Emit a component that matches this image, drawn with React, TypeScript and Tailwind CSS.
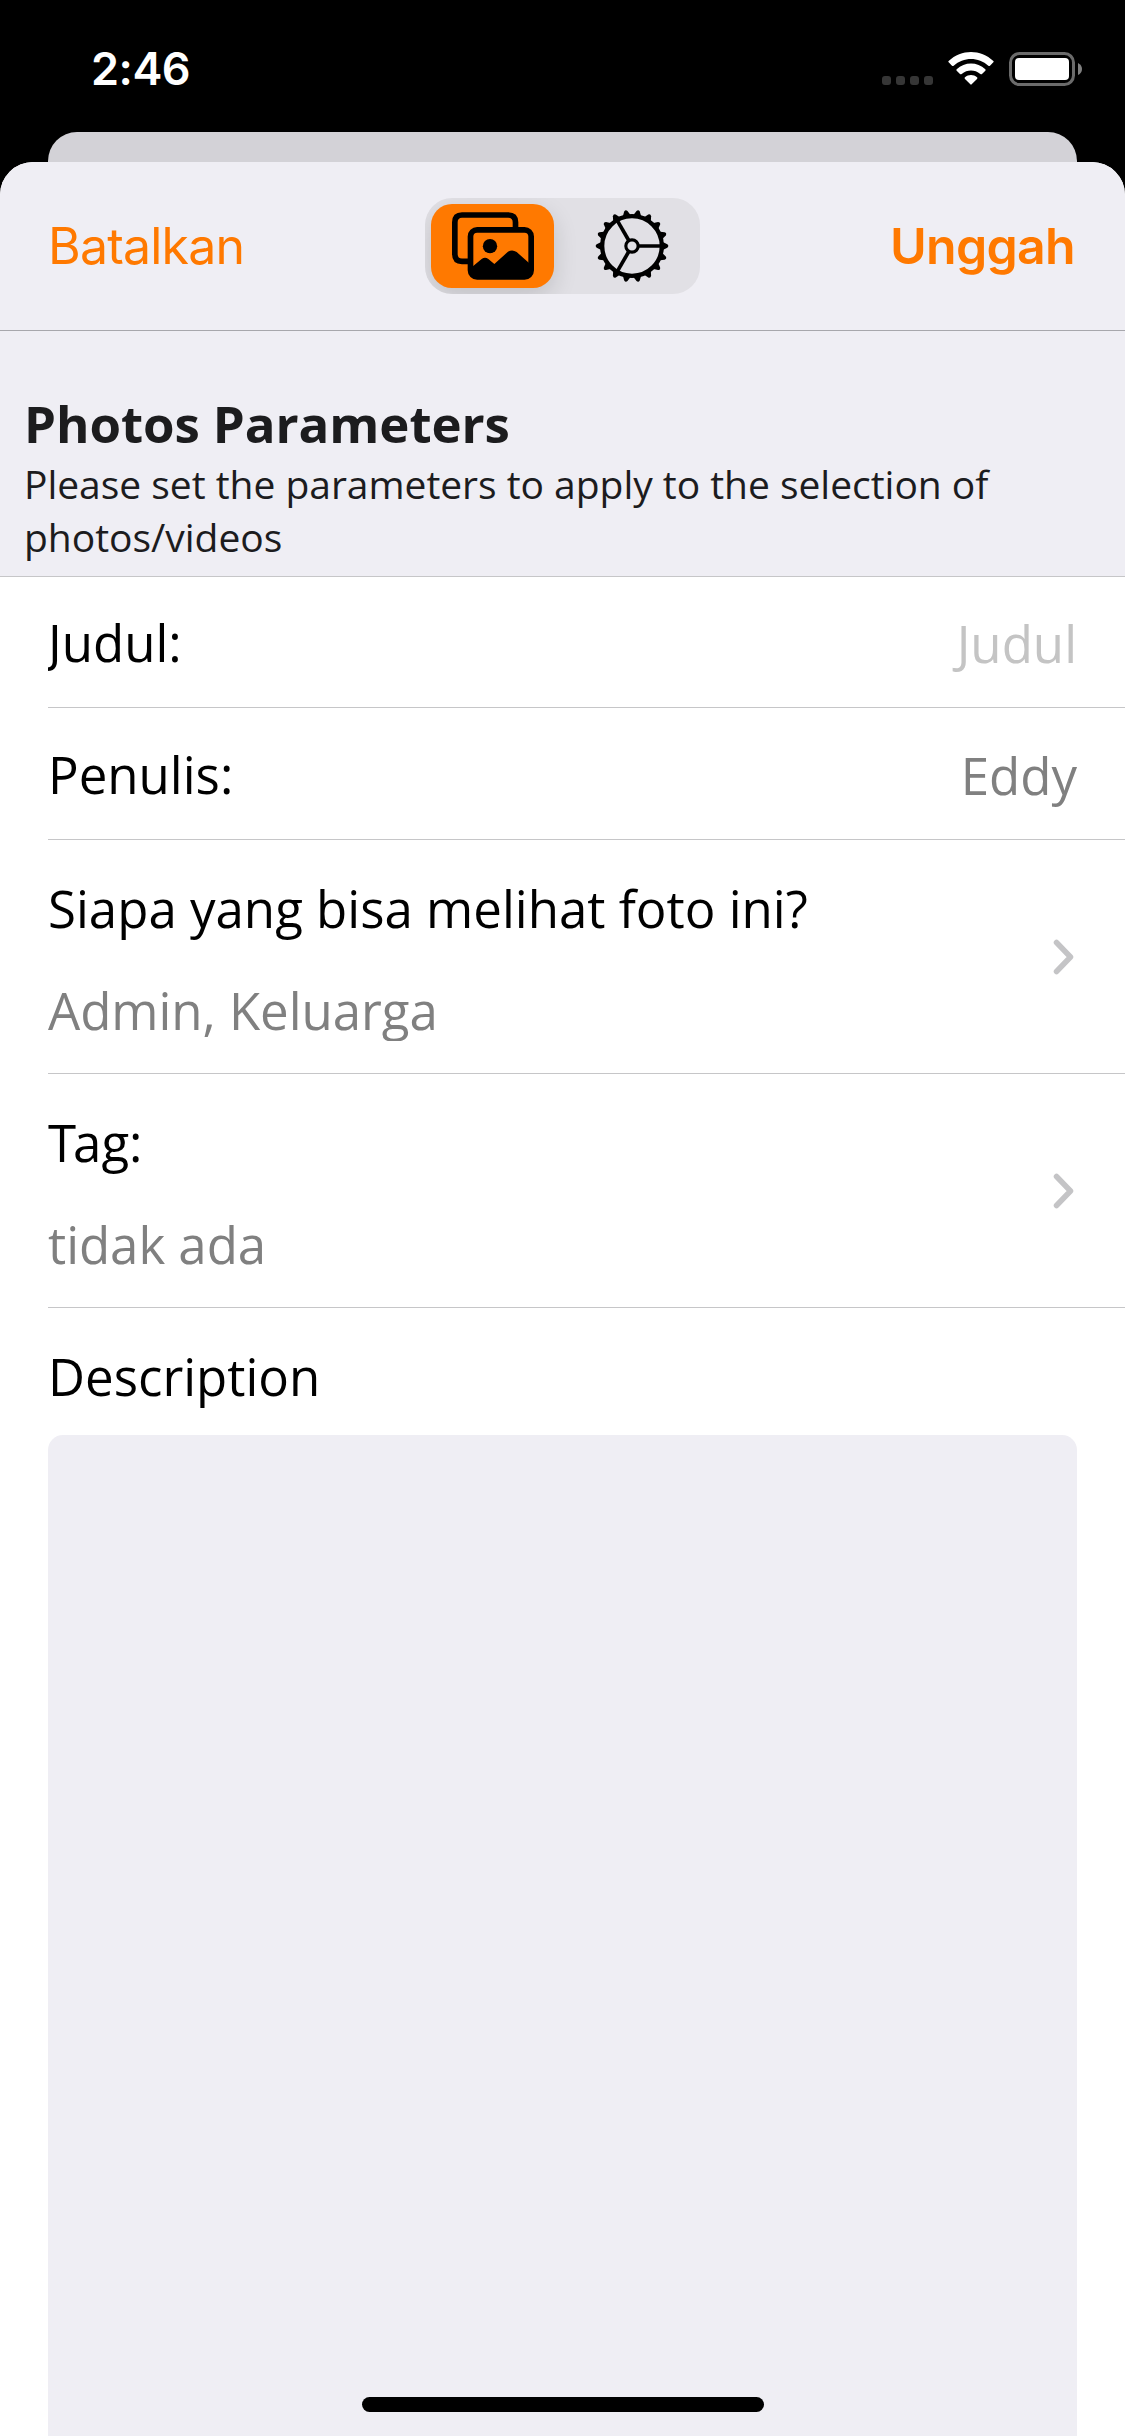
import type { ReactNode } from "react";

const teeth = Array.from({ length: 18 }, (_, i) => i * 20);

function WifiIcon() {
  return (
    <svg className="mt-[52px] h-[33px] w-[46px]" viewBox="0 0 138 99" fill="#fff">
      <path d="M2 27 C40 -9 98 -9 136 27 Q138 29 136 31 L126 41 Q124 43 121 41 C92 14 46 14 17 41 Q14 43 12 41 L2 31 Q0 29 2 27 Z" />
      <path d="M26 52 C50 29 88 29 112 52 Q114 54 112 56 L102 66 Q100 68 97 66 C80 52 58 52 41 66 Q38 68 36 66 L26 56 Q24 54 26 52 Z" />
      <path d="M51 76 C61 67 77 67 87 76 Q90 78 87 81 L71 97 Q69 99 67 97 L51 81 Q48 78 51 76 Z" />
    </svg>
  );
}

function BatteryIcon() {
  return (
    <svg className="mt-[52px] h-[34px] w-[73px]" viewBox="0 0 73 34" fill="none">
      <rect x="1.5" y="1.5" width="63" height="31" rx="9" stroke="#6b6b6b" strokeWidth="3" />
      <rect x="6" y="6" width="54" height="22" rx="4" fill="#fff" />
      <path d="M69 11 Q73 13 73 17 Q73 21 69 23 Z" fill="#808080" />
    </svg>
  );
}

function PhotosIcon() {
  return (
    <svg className="h-[68px] w-[82px]" viewBox="126 97 246 204" fill="none">
      <path
        d="M316.500 143 V128 Q316.500 106 294.500 106 H156 Q134.500 106 134.500 128 V223 Q134.500 245 156 245 H176"
        stroke="#000"
        strokeWidth="17"
      />
      <rect x="181.500" y="150.500" width="182" height="141" rx="20" stroke="#000" strokeWidth="17" />
      <circle cx="240" cy="199.500" r="21.500" fill="#000" />
      <path
        d="M186 262 L215 238 Q225 230 235 238 L253 253 L293 217 Q306 208 320 217 L358 251 V280 Q356 290 345 290 H200 Q188 290 186 280 Z"
        fill="#000"
      />
    </svg>
  );
}

function GearIcon() {
  return (
    <svg className="h-[74px] w-[74px]" viewBox="-111 -111 222 222" fill="none">
      {teeth.map((angle) => (
        <path
          key={angle}
          d="M88 -14 L106 -5 Q112 0 106 5 L88 14 Z"
          fill="#000"
          transform={`rotate(${angle})`}
        />
      ))}
      <circle r="89.500" stroke="#000" strokeWidth="13" />
      <circle r="18.500" stroke="#000" strokeWidth="9.500" />
      {[0, 120, 240].map((angle) => (
        <path key={angle} d="M20 0 H88" stroke="#000" strokeWidth="11" transform={`rotate(${angle})`} />
      ))}
    </svg>
  );
}

function Chevron() {
  return (
    <svg className="h-9 w-[22px]" viewBox="0 0 22 36" fill="none">
      <path d="M3.500 3.500 L17.500 18 L3.500 32.500" stroke="#c4c4c6" strokeWidth="5.500" strokeLinecap="round" strokeLinejoin="round" />
    </svg>
  );
}

function FieldRow({ label, children }: { label: string; children: ReactNode }) {
  return (
    <div className="ml-12 flex items-start justify-between border-b border-[#c6c6c8] pr-12 pt-[30px]">
      <span className="overflow-x-clip leading-[70px]">{label}</span>
      {children}
    </div>
  );
}

function LinkRow({ label, value }: { label: ReactNode; value: string }) {
  return (
    <div className="ml-12 flex h-[234px] items-center justify-between border-b border-[#c6c6c8] pr-[50px]">
      <div className="flex h-full flex-col pt-[33px]">
        <span className="leading-[70px]">{label}</span>
        <span className="mt-8 h-[66px] overflow-hidden leading-[70px] tracking-[-0.05px] text-[#808080]">{value}</span>
      </div>
      <Chevron />
    </div>
  );
}

export default function App() {
  return (
    <div className="relative flex h-[2436px] w-[1125px] flex-col overflow-hidden bg-black font-['Open_Sans',sans-serif] text-[51px] text-black">
      <div className="flex h-[132px] shrink-0 items-start justify-between pl-[91px] pr-[43px]">
        <span className="mt-[40px] font-['Inter',sans-serif] text-[45px] font-semibold leading-[58px] tracking-[-0.5px] text-white">
          2:46
        </span>
        <div className="flex">
          <div className="mr-[15px] mt-[76px] flex gap-[5px]">
            <i className="size-[9px] rounded-[3px] bg-[#363636]" />
            <i className="size-[9px] rounded-[3px] bg-[#363636]" />
            <i className="size-[9px] rounded-[3px] bg-[#363636]" />
            <i className="size-[9px] rounded-[3px] bg-[#363636]" />
          </div>
          <WifiIcon />
          <div className="ml-[15px]">
            <BatteryIcon />
          </div>
        </div>
      </div>

      <div className="mx-12 h-[30px] shrink-0 rounded-t-[29px] bg-[#d3d2d7]" />

      <div className="flex grow flex-col overflow-hidden rounded-t-[33px] bg-white">
        <nav className="grid h-[169px] shrink-0 grid-cols-[1fr_275px_1fr] items-start border-b border-[#a7a7ac] bg-[#efeef4] px-12 font-['Inter',sans-serif] text-[50px] leading-[60px] text-[#ff7900]">
          <button className="mt-[54px] justify-self-start tracking-[-0.8px]">Batalkan</button>
          <div className="mt-9 flex h-24 overflow-hidden rounded-[27px] bg-[#e1e0e5] p-1.5">
            <div className="flex h-[84px] w-[123px] items-center justify-center rounded-[21px] bg-[#ff7900] shadow-[0_9px_24px_rgba(0,0,0,0.14)]">
              <PhotosIcon />
            </div>
            <div className="flex grow items-center justify-center pl-[15px]">
              <GearIcon />
            </div>
          </div>
          <button className="mr-0.5 mt-[54px] justify-self-end font-semibold tracking-[-0.7px]">Unggah</button>
        </nav>

        <header className="h-[246px] shrink-0 border-b border-[#c6c6c8] bg-[#efeef4] px-6 pt-[57px] text-[#1c1c1e]">
          <h1 className="font-bold leading-[70px] tracking-[-0.08px]">Photos Parameters</h1>
          <p className="-mt-px text-[39px] leading-[53px] tracking-[-0.03px]">
            Please set the parameters to apply to the selection of photos/videos
          </p>
        </header>

        <div className="h-[131px] shrink-0 [&>div]:h-[131px]">
          <FieldRow label="Judul:">
            <span className="mt-px leading-[70px] text-[#c4c4c4]">Judul</span>
          </FieldRow>
        </div>
        <div className="h-[132px] shrink-0 [&>div]:h-[132px] [&>div]:pt-[31px]">
          <FieldRow label="Penulis:">
            <span className="mt-px leading-[70px] text-[#808080]">Eddy</span>
          </FieldRow>
        </div>
        <LinkRow label="Siapa yang bisa melihat foto ini?" value="Admin, Keluarga" />
        <LinkRow
          label={
            <>
              <span className="tracking-[-3px]">T</span>ag:
            </>
          }
          value="tidak ada"
        />

        <div className="flex grow flex-col px-12 pt-[33px]">
          <span className="leading-[70px]">Description</span>
          <div className="mt-6 grow rounded-t-[15px] bg-[#efeef4]" />
        </div>
      </div>

      <div className="absolute bottom-6 left-[362px] h-[15px] w-[402px] rounded-full bg-black" />
    </div>
  );
}
